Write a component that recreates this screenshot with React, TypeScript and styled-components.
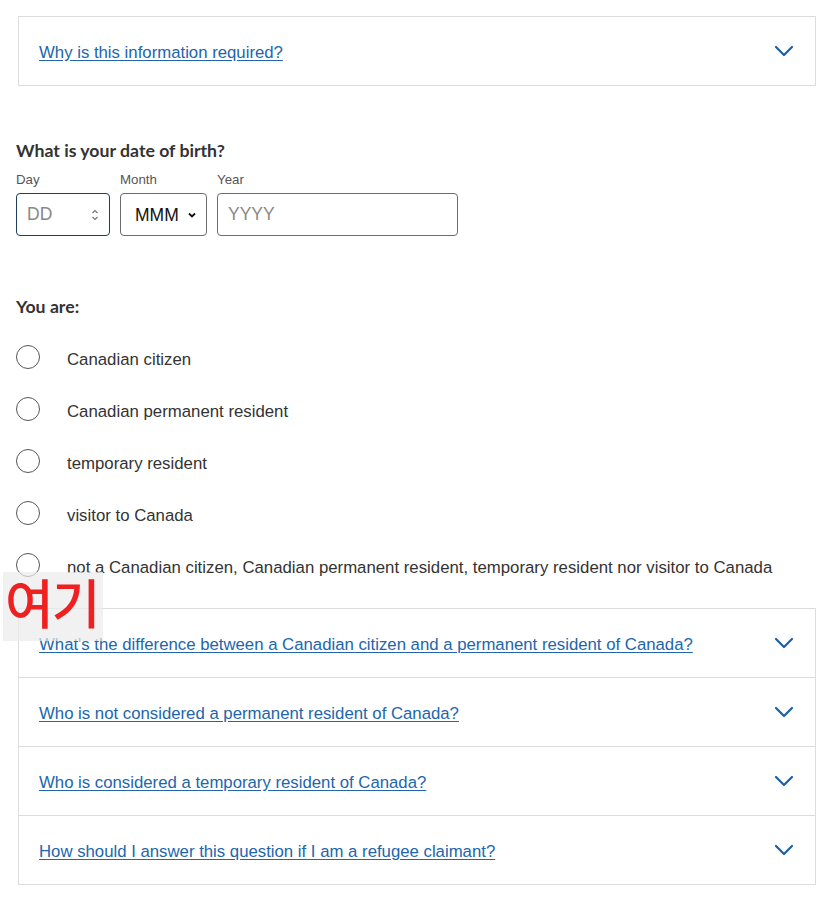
import React from "react";
import styled, { createGlobalStyle } from "styled-components";

const Global = createGlobalStyle`
  html, body { margin: 0; padding: 0; background: #fff; }
  body { font-family: "Liberation Sans", Arial, sans-serif; color: #333; }
  * { box-sizing: border-box; }
`;

const Page = styled.div`
  position: relative;
  width: 827px;
  padding: 16px 11px 16px 16px;
`;

const AccordionGroup = styled.div<{ $top?: number }>`
  margin: ${(p) => p.$top ?? 0}px 0 0 2px;
  border-top: 1px solid #dcdcdc;
`;

const AccordionItem = styled.div`
  display: flex;
  align-items: center;
  justify-content: space-between;
  height: 69px;
  padding: 3px 21px 0 20px;
  border: 1px solid #dcdcdc;
  border-top: none;
  background: #fff;
`;

const AccordionLink = styled.a`
  font-family: "Liberation Sans", Arial, sans-serif;
  font-size: 16.75px;
  color: #2166ac;
  text-decoration: underline;
  text-underline-offset: 2px;
  cursor: pointer;
`;

const Chevron = styled.svg`
  width: 20px;
  height: 12px;
  flex: none;
  margin-top: -3px;
`;

const Heading = styled.div<{ $top: number }>`
  font-family: Lato, "Liberation Sans", sans-serif;
  font-weight: 700;
  font-size: 17.7px;
  line-height: 22px;
  color: #333;
  margin-top: ${(p) => p.$top}px;
`;

const DateRow = styled.div`
  display: flex;
  gap: 10px;
  margin-top: 10px;
`;

const Field = styled.div`
  display: flex;
  flex-direction: column;
  gap: 5px;
`;

const FieldLabel = styled.label`
  font-family: "Liberation Sans", Arial, sans-serif;
  font-size: 13.3px;
  line-height: 16px;
  color: #555;
`;

const BoxInput = styled.div<{ $w: number; $focus?: boolean }>`
  width: ${(p) => p.$w}px;
  height: 43px;
  border: 1px solid ${(p) => (p.$focus ? "#1c3f5e" : "#6b6b6b")};
  border-radius: 4px;
  display: flex;
  align-items: center;
  padding: 0 10px;
  font-family: "Liberation Sans", Arial, sans-serif;
  font-size: 17.5px;
  color: #888;
  justify-content: space-between;
`;

const SelectText = styled.span`
  color: #111;
  padding: 2px 0 0 4px;
`;

const Spinner = styled.svg`
  width: 8px;
  height: 14px;
`;

const RadioList = styled.div`
  display: flex;
  flex-direction: column;
  margin-top: 28px;
  gap: 28px;
`;

const RadioRow = styled.label`
  display: flex;
  align-items: center;
  gap: 27px;
  height: 24px;
  font-family: "Liberation Sans", Arial, sans-serif;
  font-size: 16.8px;
  color: #333;
`;

const RadioCircle = styled.span`
  width: 24px;
  height: 24px;
  border-radius: 50%;
  border: 1px solid #555;
  flex: none;
  margin-top: -3px;
`;

const RadioText = styled.span`
  margin-top: 3px;
`;

const Marker = styled.div`
  position: absolute;
  left: 3px;
  top: 572px;
  width: 100px;
  height: 69px;
  background: rgba(235, 235, 235, 0.7);
  color: #ee2020;
  font-family: "Noto Sans CJK KR", sans-serif;
  font-size: 53px;
  font-weight: 500;
  line-height: 58px;
  padding-left: 2px;
  white-space: nowrap;
  letter-spacing: -2px;
`;

const ChevronIcon = () => (
  <Chevron viewBox="0 0 20 12">
    <path d="M2 2 L10 10 L18 2" fill="none" stroke="#1d5fa3" strokeWidth="2.2" strokeLinecap="round" strokeLinejoin="round" />
  </Chevron>
);

const Accordion = ({ items, top }: { items: string[]; top?: number }) => (
  <AccordionGroup $top={top}>
    {items.map((t) => (
      <AccordionItem key={t}>
        <AccordionLink>{t}</AccordionLink>
        <ChevronIcon />
      </AccordionItem>
    ))}
  </AccordionGroup>
);

const options = [
  "Canadian citizen",
  "Canadian permanent resident",
  "temporary resident",
  "visitor to Canada",
  "not a Canadian citizen, Canadian permanent resident, temporary resident nor visitor to Canada",
];

export default function App() {
  return (
    <Page>
      <Global />
      <Accordion items={["Why is this information required?"]} />
      <Heading $top={54}>What is your date of birth?</Heading>
      <DateRow>
        <Field>
          <FieldLabel>Day</FieldLabel>
          <BoxInput $w={94} $focus>
            <span>DD</span>
            <Spinner viewBox="0 0 8 14">
              <path d="M1.5 5 L4 2.5 L6.5 5" fill="none" stroke="#777" strokeWidth="1.2" />
              <path d="M1.5 9 L4 11.5 L6.5 9" fill="none" stroke="#777" strokeWidth="1.2" />
            </Spinner>
          </BoxInput>
        </Field>
        <Field>
          <FieldLabel>Month</FieldLabel>
          <BoxInput $w={87}>
            <SelectText>MMM</SelectText>
            <Spinner viewBox="0 0 8 14">
              <path d="M1 5.5 L4 8.5 L7 5.5" fill="none" stroke="#111" strokeWidth="1.8" />
            </Spinner>
          </BoxInput>
        </Field>
        <Field>
          <FieldLabel>Year</FieldLabel>
          <BoxInput $w={241}>
            <span>YYYY</span>
          </BoxInput>
        </Field>
      </DateRow>
      <Heading $top={60}>You are:</Heading>
      <RadioList>
        {options.map((o) => (
          <RadioRow key={o}>
            <RadioCircle />
            <RadioText>{o}</RadioText>
          </RadioRow>
        ))}
      </RadioList>
      <Accordion
        top={30}
        items={[
          "What's the difference between a Canadian citizen and a permanent resident of Canada?",
          "Who is not considered a permanent resident of Canada?",
          "Who is considered a temporary resident of Canada?",
          "How should I answer this question if I am a refugee claimant?",
        ]}
      />
      <Marker>여기</Marker>
    </Page>
  );
}
